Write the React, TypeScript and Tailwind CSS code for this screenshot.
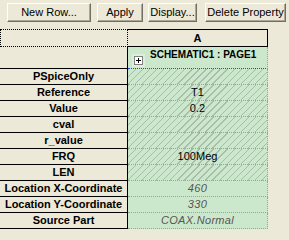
const rows = [
  { label: 'PSpiceOnly', value: '', hatch: true },
  { label: 'Reference', value: 'T1', hatch: true },
  { label: 'Value', value: '0.2', hatch: true },
  { label: 'cval', value: '', hatch: true },
  { label: 'r_value', value: '', hatch: true },
  { label: 'FRQ', value: '100Meg', hatch: true },
  { label: 'LEN', value: '', hatch: true },
  { label: 'Location X-Coordinate', value: '460', italic: true },
  { label: 'Location Y-Coordinate', value: '330', italic: true },
  { label: 'Source Part', value: 'COAX.Normal', italic: true },
]

function XpButton({ label, width }: { label: string; width: string }) {
  return (
    <button
      className={`${width} h-[19px] box-border border border-t-white border-l-white border-b-[#716f64] border-r-[#716f64] bg-[#ece9d8] shadow-[inset_-1px_-1px_0_#aca899] text-[11px] leading-[17px] text-black text-center`}
    >
      {label}
    </button>
  )
}

export default function App() {
  return (
    <div className="w-[289px] h-[240px] overflow-hidden bg-[#ece9d8] font-['Liberation_Sans',Arial,sans-serif] text-black">
      {/* toolbar */}
      <div className="flex pl-[7px] pt-[3px]">
        <XpButton label="New Row..." width="w-[84px]" />
        <div className="w-[6px]" />
        <XpButton label="Apply" width="w-[46px]" />
        <div className="w-[5px]" />
        <XpButton label="Display..." width="w-[49px]" />
        <div className="w-[8px]" />
        <XpButton label="Delete Property" width="w-[81px]" />
      </div>

      {/* grid */}
      <div className="mt-[7px] flex flex-col">
        {/* column header */}
        <div className="flex h-[18px]">
          <div className="w-[128px] box-border border border-dotted border-black" />
          <div className="w-[140px] box-border border-t border-r border-b border-black text-[11px] font-bold leading-[16px] text-center">
            A
          </div>
        </div>

        {/* part group row */}
        <div className="flex h-[22px]">
          <div className="w-[128px] box-border border-b border-r border-black" />
          <div className="w-[140px] box-border bg-[#cce8cc] border-b border-dotted border-b-[#2050e0] border-r border-r-[#a0a0a0] flex items-start">
            <div className="ml-[4px] mt-[7px] w-[13px] h-[13px] bg-[#dcefdc] flex items-center justify-center">
              <div className="w-[9px] h-[9px] box-border border border-[#808080] bg-white flex items-center justify-center">
                <svg width="7" height="7" viewBox="0 0 7 7">
                  <rect x="1" y="3" width="5" height="1" fill="#000" />
                  <rect x="3" y="1" width="1" height="5" fill="#000" />
                </svg>
              </div>
            </div>
            <span className="ml-[5px] mt-[2px] text-[10px] font-bold leading-[12px] whitespace-nowrap">
              SCHEMATIC1 : PAGE1
            </span>
          </div>
        </div>

        {/* property rows */}
        {rows.map((r) => (
          <div key={r.label} className="flex h-[16px]">
            <div className="w-[128px] box-border border-b border-r border-black text-[11px] font-bold leading-[15px] text-center whitespace-nowrap">
              {r.label}
            </div>
            <div
              className={`w-[140px] box-border border-b border-r border-dotted border-[#a0a0a0] text-[11px] leading-[15px] text-center ${
                r.hatch
                  ? 'bg-[#cce8cc] bg-[repeating-linear-gradient(135deg,#a9bba9_0px,#a9bba9_1px,transparent_1px,transparent_5px)]'
                  : 'bg-[#cce8cc]'
              } ${r.italic ? 'italic text-[#555555] tracking-[0.3px]' : ''}`}
            >
              {r.value}
            </div>
          </div>
        ))}
      </div>
    </div>
  )
}
